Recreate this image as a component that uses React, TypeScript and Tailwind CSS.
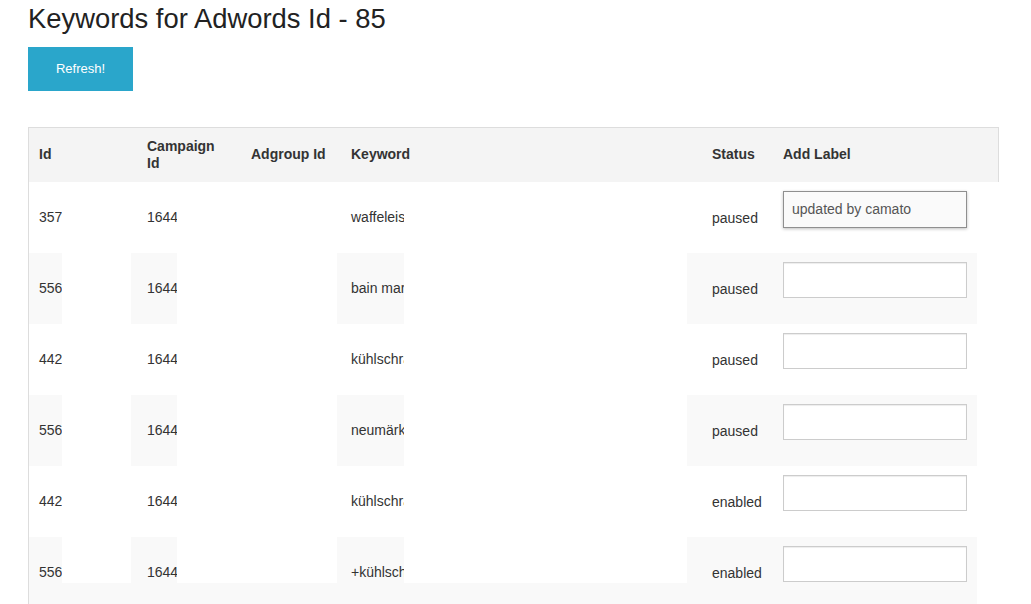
import React from "react";

type Row = { id: string; camp: string; kw: string; status: string; label?: string };

const rows: Row[] = [
  { id: "357", camp: "1644", kw: "waffeleisen", status: "paused", label: "updated by camato" },
  { id: "556", camp: "1644", kw: "bain marie", status: "paused" },
  { id: "442", camp: "1644", kw: "kühlschrank", status: "paused" },
  { id: "556", camp: "1644", kw: "neumärker", status: "paused" },
  { id: "442", camp: "1644", kw: "kühlschrank", status: "enabled" },
  { id: "556", camp: "1644", kw: "+kühlschrank", status: "enabled" },
];

function TableRow({ r, striped }: { r: Row; striped: boolean }) {
  const bg = striped ? "bg-[#f9f9f9]" : "bg-white";
  return (
    <div className="flex h-[71px] text-[14px] text-[#333]">
      <div className={`w-[33px] shrink-0 overflow-hidden whitespace-nowrap pl-[10px] flex items-center ${bg}`}>{r.id}</div>
      <div className="w-[69px] shrink-0" />
      <div className={`w-[46px] shrink-0 overflow-hidden whitespace-nowrap pl-[16px] flex items-center ${bg}`}>{r.camp}</div>
      <div className="w-[160px] shrink-0" />
      <div className={`w-[67px] shrink-0 overflow-hidden whitespace-nowrap pl-[14px] flex items-center ${bg}`}>{r.kw}</div>
      <div className="w-[283px] shrink-0" />
      <div className={`w-[290px] shrink-0 relative ${bg}`}>
        <div className="absolute left-[25px] top-0 h-full flex items-center pt-[1px]">{r.status}</div>
        {r.label ? (
          <div className="absolute left-[96px] top-[9px] w-[184px] h-[37px] border border-[#8f8f8f] bg-[#fafafa] shadow-[0_1px_3px_rgba(0,0,0,0.25)] pl-[8px] flex items-center text-[14px] text-[#555]">
            {r.label}
          </div>
        ) : (
          <div className="absolute left-[96px] top-[9px] w-[184px] h-[36px] border border-[#cccccc] bg-white shadow-[inset_0_1px_1px_rgba(0,0,0,0.075)]" />
        )}
      </div>
    </div>
  );
}

export default function App() {
  return (
    <div
      className="w-[1031px] h-[604px] overflow-hidden bg-white text-[#333]"
      style={{ fontFamily: '"Liberation Sans", Arial, sans-serif' }}
    >
      <div className="pl-[28px]">
        <h1 className="text-[27.4px] leading-[30px] pt-[4px] font-normal text-[#222]">Keywords for Adwords Id - 85</h1>
        <button className="mt-[13px] w-[105px] h-[44px] bg-[#2aa6cb] text-white text-[13px] flex items-center justify-center">
          Refresh!
        </button>
        <div className="mt-[36px] border-l border-[#dddddd]">
          <div className="w-[970px] h-[55px] bg-[#f4f4f4] border-t border-r border-[#dddddd] flex items-center font-bold text-[14px] text-[#333] leading-[17px] pb-[1px]">
            <div className="w-[118px] pl-[10px] shrink-0">Id</div>
            <div className="w-[104px] shrink-0 pr-[30px]">Campaign Id</div>
            <div className="w-[100px] shrink-0">Adgroup Id</div>
            <div className="w-[361px] shrink-0">Keyword</div>
            <div className="w-[71px] shrink-0">Status</div>
            <div className="shrink-0">Add Label</div>
          </div>
          {rows.slice(0, 5).map((r, i) => (
            <TableRow key={i} r={r} striped={i % 2 === 1} />
          ))}
          <div className="h-[46px] overflow-hidden">
            <TableRow r={rows[5]} striped={true} />
          </div>
          <div className="w-[948px] h-[30px] bg-[#f9f9f9]" />
        </div>
      </div>
    </div>
  );
}
